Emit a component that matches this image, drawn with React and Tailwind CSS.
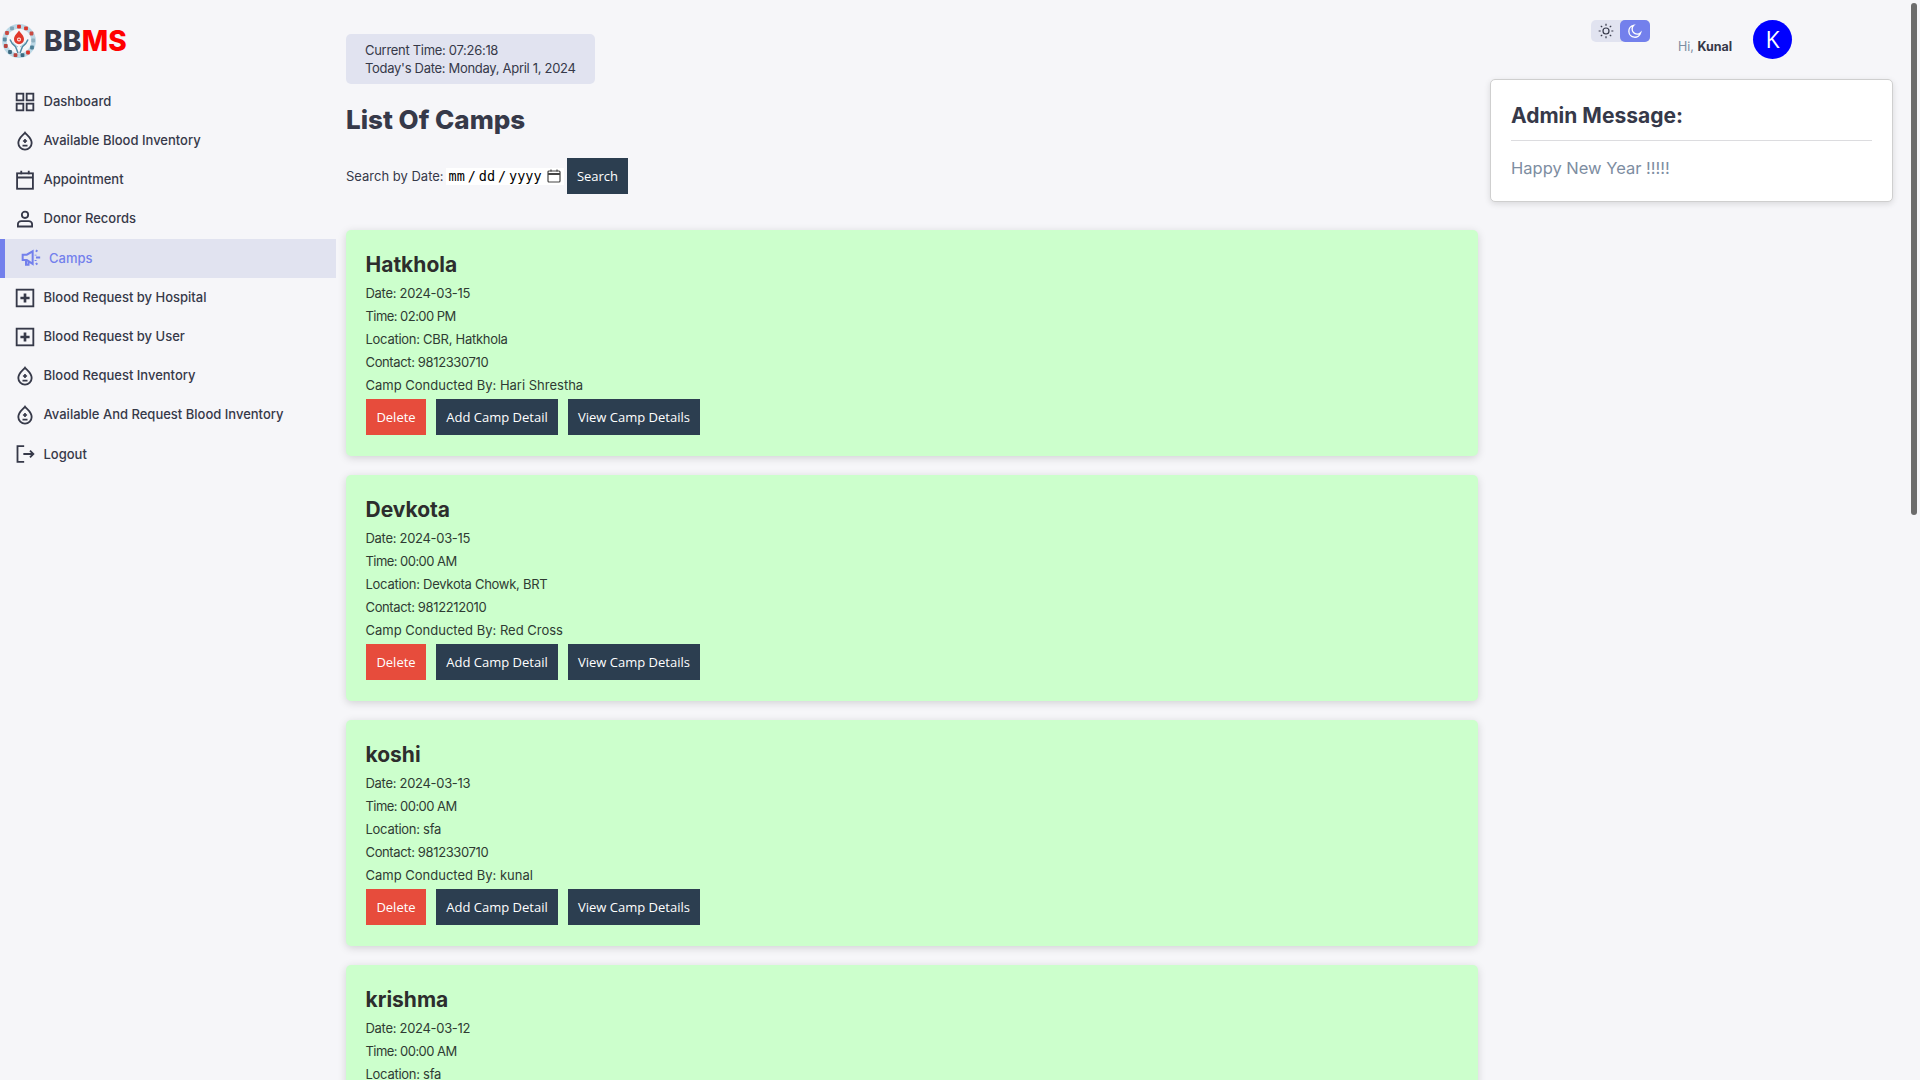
const Ic = ({ children }) => (
  <svg viewBox="0 0 24 24" fill="none" stroke="currentColor" strokeWidth="2.2" className="w-[20px] h-[20px] shrink-0">{children}</svg>
);
const Grid = () => <Ic><rect x="2" y="2" width="8" height="8" /><rect x="14" y="2" width="8" height="8" /><rect x="2" y="14" width="8" height="8" /><rect x="14" y="14" width="8" height="8" /></Ic>;
const Drop = () => <Ic><path d="M12 2 C14 5 20 8 20 14.5 A8 7.8 0 0 1 4 14.5 C4 8 10 5 12 2 Z" /><path d="M12 9.5v5M9.5 12h5M9 17.5h6" strokeWidth="2" /></Ic>;
const Cal = () => <Ic><rect x="2.5" y="4" width="19" height="18.5" /><path d="M2.5 9h19M7.5 1v4M16.5 1v4" /></Ic>;
const User = () => <Ic><circle cx="12" cy="7" r="3.8" /><path d="M3.5 21v-3c0-2 2-3.5 4-3.5h9c2 0 4 1.5 4 3.5v3z" /></Ic>;
const Plus = () => <Ic><rect x="2" y="2" width="20" height="20" /><path d="M12 6.5v11M6.5 12h11" strokeWidth="3.2" /></Ic>;
const Out = () => <Ic><path d="M11 2.5H3v19h8M10 12h12M18 8l4 4-4 4" /></Ic>;
const Mega = () => (
  <svg viewBox="0 0 24 24" fill="none" stroke="currentColor" strokeWidth="2.4" className="w-[20px] h-[20px] shrink-0">
    <path d="M2 8h5l7-4v15l-7-4.5H2zM6 14.5V20h3v-4" />
    <path d="M18 4.5l1.5-2M18 11.5h5M18 18l1.5 2M17.5 8v1M17.5 14.5v1" />
  </svg>
);
const Logo = () => (
  <svg viewBox="0 0 34 34" className="w-[34px] h-[34px] shrink-0">
    <circle cx="17" cy="17" r="14.6" fill="none" stroke="#bcd8e6" strokeWidth="4.6" />
    <circle cx="17" cy="17" r="11.6" fill="#f6f6f9" />
    {[[17, 2.6, "#d9362b"], [10, 4.4, "#7fa5b7"], [24, 4.4, "#d9362b"], [5, 9, "#c94a42"], [29.5, 9.5, "#c94a42"], [2.8, 15.5, "#5b8ba3"], [31.2, 16.5, "#8fb0c0"], [3.8, 22, "#b8433d"], [30, 23.5, "#4d7f96"], [8, 28, "#3d6a80"], [26, 28.5, "#d9362b"], [13.5, 31.2, "#b8433d"], [20.5, 31.2, "#3d6a80"]].map(([x, y, c], i) => (
      <rect key={i} x={x - 1.9} y={y - 1.9} width="3.8" height="3.8" rx=".8" fill={c} />
    ))}
    <path d="M17 6.5c1.6 2.8 5 5 5 8.8a5 5 0 0 1-10 0c0-3.8 3.4-6 5-8.8z" fill="#e1382c" />
    <circle cx="17" cy="15.5" r="2" fill="#fff" />
    <path d="M17 14.3v2.4M15.8 15.5h2.4" stroke="#e1382c" strokeWidth=".8" />
    <path d="M8 15.5c1.5 4 3 5.5 5.5 7L16 29M26 15.5c-1.5 4-3 5.5-5.5 7L18 29" fill="none" stroke="#4f8aa4" strokeWidth="1.5" />
    <path d="M10.5 18c1.5 2 3 3.5 5.5 5M23.5 18c-1.5 2-3 3.5-5.5 5" fill="none" stroke="#9cc3d4" strokeWidth="1" />
  </svg>
);

const nav = [
  ["Dashboard", Grid], ["Available Blood Inventory", Drop], ["Appointment", Cal], ["Donor Records", User], ["Camps", Mega, true],
  ["Blood Request by Hospital", Plus], ["Blood Request by User", Plus], ["Blood Request Inventory", Drop],
  ["Available And Request Blood Inventory", Drop], ["Logout", Out],
];
const camps = [
  ["Hatkhola", "2024-03-15", "02:00 PM", "CBR, Hatkhola", "9812330710", "Hari Shrestha"],
  ["Devkota", "2024-03-15", "00:00 AM", "Devkota Chowk, BRT", "9812212010", "Red Cross"],
  ["koshi", "2024-03-13", "00:00 AM", "sfa", "9812330710", "kunal"],
  ["krishma", "2024-03-12", "00:00 AM", "sfa", "9812330710", "kunal"],
];
const btn = "h-9 pt-px flex items-center justify-center text-[13px] text-white font-['Open_Sans',sans-serif]";

export default function App() {
  return (
    <div className="h-screen overflow-hidden relative bg-[#f6f6f9] text-[#363949] font-['Inter','Open_Sans',sans-serif]">
      <div aria-hidden="true" className="absolute right-[3px] top-[3px] w-[6px] h-[512px] rounded-[3px] bg-[#6c6c6c]" />
      <div className="flex items-start">
        <aside className="w-[336px] shrink-0">
          <div className="flex items-start gap-[8px] pl-[2px] pt-[24px] h-[82px]">
            <Logo />
            <span className="text-[28px] font-extrabold leading-[36px] tracking-[0.2px] mt-[-1px]">BB<span className="text-[#ff0000]">MS</span></span>
          </div>
          <nav>
            {nav.map(([t, I, a]) => (
              <div key={t} className={"h-[39.2px] flex items-center text-[13px] font-medium " + (a ? "bg-[#e1e3f0] border-l-[5px] border-[#7380ec] text-[#7380ec] pl-[16px] gap-[8px]" : "pl-[15px] gap-[8.5px]")}>
                <I />
                <span>{t}</span>
              </div>
            ))}
          </nav>
        </aside>

        <main className="w-[1132px] ml-[10px] shrink-0 pt-[34px]">
          <div className="w-[249px] h-[50px] rounded-[5px] bg-[#e1e3f0] pl-[19px] pt-[7px] text-[13px] leading-[18px] tracking-[-0.3px]">
            <div>Current Time: 07:26:18</div>
            <div>Today's Date: Monday, April 1, 2024</div>
          </div>
          <h1 className="text-[26px] font-extrabold leading-[36px] mt-[18px]">List Of Camps</h1>
          <div className="flex items-center mt-[20px] h-9 text-[13px]">
            <span className="w-[100px] mt-px">Search by Date:</span>
            <div className="w-[118px] h-[17px] bg-white flex items-center pl-[2.5px] text-[13.5px] leading-[17px] text-black font-['DejaVu_Sans_Mono',monospace]">
              <span>mm</span><span className="w-[14px] text-center">/</span><span>dd</span><span className="w-[14px] text-center">/</span><span>yyyy</span>
              <svg viewBox="0 0 14 14" fill="none" stroke="#444" strokeWidth="1.2" className="w-[14px] h-[14px] ml-[5.5px]"><rect x="1" y="2" width="12" height="11" rx="1" /><path d="M1 5h12" strokeWidth="2" /><path d="M4 .5v2M10 .5v2" /></svg>
            </div>
            <button className={btn + " ml-[3px] w-[61px] bg-[#2c3e50]"}>Search</button>
          </div>
          <div className="mt-[36px] flex flex-col gap-[19px]">
            {camps.map((c, i) => (
              <section key={i} className="h-[226px] rounded-[5px] bg-[#ccffcc] shadow-[0_2px_8px_rgba(0,0,0,0.15)] pt-[17px] pl-[20px] text-[13px] text-[#2f3b33]">
                <h2 className="text-[21px] font-bold leading-[35px] text-[#2d2d2d] ml-[-0.5px]">{c[0]}</h2>
                <div className="leading-[23px] ml-[-0.5px]">
                  <p className="tracking-[-0.3px]">Date: {c[1]}</p>
                  <p className="tracking-[-0.55px]">Time: {c[2]}</p>
                  <p className="tracking-[-0.27px]">Location: {c[3]}</p>
                  <p className="tracking-[-0.37px]">Contact: {c[4]}</p>
                  <p>Camp Conducted By: {c[5]}</p>
                </div>
                <div className="flex gap-[10px] mt-[2px]">
                  <button className={btn + " w-[60px] bg-[#e74c3c]"}>Delete</button>
                  <button className={btn + " w-[122px] bg-[#2c3e50]"}>Add Camp Detail</button>
                  <button className={btn + " w-[132px] bg-[#2c3e50]"}>View Camp Details</button>
                </div>
              </section>
            ))}
          </div>
        </main>

        <div className="w-[403px] ml-[12px] shrink-0">
          <div className="h-[79px] relative">
            <div className="absolute left-[101px] top-[20px] w-[59px] h-[22px] rounded-[5px] bg-[#e1e3f0] flex">
              <div className="w-[29px] flex items-center justify-center">
                <svg viewBox="0 0 24 24" fill="none" stroke="currentColor" strokeWidth="1.8" className="w-[16px] h-[16px]"><circle cx="12" cy="12" r="4.5" /><path d="M12 1v3M12 20v3M1 12h3M20 12h3M4.2 4.2l2.1 2.1M17.7 17.7l2.1 2.1M4.2 19.8l2.1-2.1M17.7 6.3l2.1-2.1" /></svg>
              </div>
              <div className="w-[30px] rounded-[5px] bg-[#7380ec] text-white flex items-center justify-center">
                <svg viewBox="0 0 24 24" fill="none" stroke="currentColor" strokeWidth="2" className="w-[16px] h-[16px]"><path d="M20.5 14.5A9 9 0 1 1 10 3.5a7 7 0 0 0 10.5 11z" /></svg>
              </div>
            </div>
            <div className="absolute left-[188px] top-[38px] text-[12.5px] leading-[18px] whitespace-nowrap"><span className="text-[#7d8da1]">Hi, </span><b className="font-bold">Kunal</b></div>
            <div className="absolute left-[263px] top-[20px] w-[39px] h-[39px] rounded-full bg-[#0000ff] text-white flex items-center justify-center text-[23px] font-['Open_Sans',sans-serif]">K</div>
          </div>
          <div className="h-[123px] bg-white rounded-[5px] border border-[#cfcfcf] shadow-[0_2px_6px_rgba(0,0,0,0.12)] px-[20px] pt-[22px]">
            <h3 className="text-[21px] font-bold leading-[28px]">Admin Message:</h3>
            <div className="h-px bg-[#dcdcdf] mt-[10px]" />
            <p className="text-[16.5px] text-[#7d8da1] mt-[15px] leading-[24px]">Happy New Year !!!!!</p>
          </div>
        </div>
      </div>
    </div>
  );
}
